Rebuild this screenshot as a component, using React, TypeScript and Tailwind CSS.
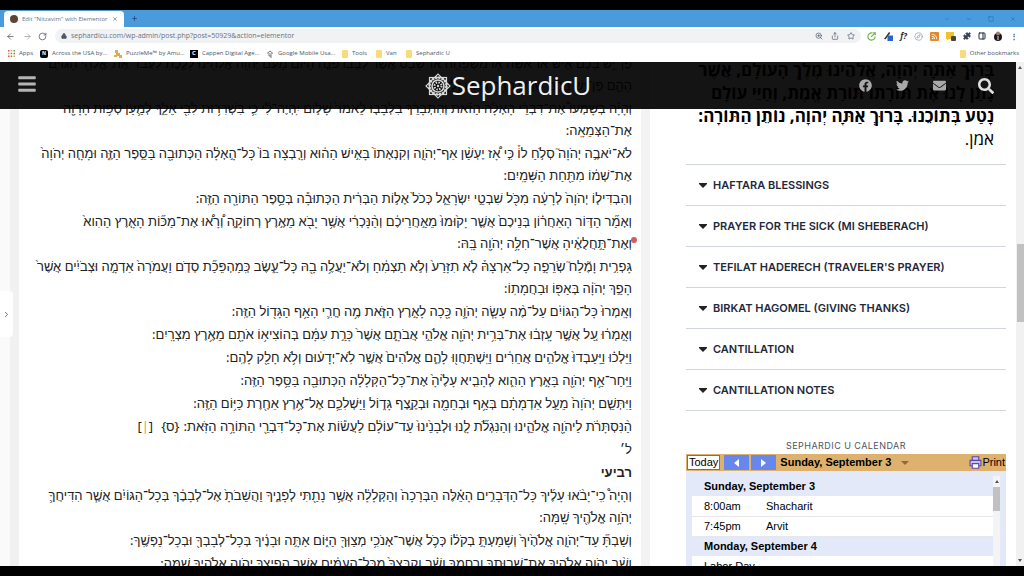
import {
  ArrowLeft,
  ArrowRight,
  ChevronDown,
  ChevronRight,
  Compass,
  Lock,
  Minus,
  PanelRight,
  Plus,
  Puzzle,
  RotateCw,
  Rss,
  Share,
  Square,
  Star,
  X,
  ZoomIn,
} from "lucide-react";
import { FaBars, FaEnvelope, FaFacebook, FaSearch, FaTwitter } from "react-icons/fa";

type Verse = { lines: string[]; bold?: boolean; sectionEnd?: boolean };

const verses: Verse[] = [
  {
    lines: [
      "פֶּן־יֵ֣שׁ בָּכֶ֗ם אִ֣ישׁ אֽוֹ־אִשָּׁ֞ה א֧וֹ מִשְׁפָּחָ֣ה אוֹ־שֵׁ֗בֶט אֲשֶׁר֩ לְבָב֨וֹ פֹנֶ֤ה הַיּוֹם֙ מֵעִם֙ יְהֹוָ֣ה אֱלֹהֵ֔ינוּ לָלֶ֣כֶת לַעֲבֹ֔ד אֶת־אֱלֹהֵ֖י הַגּוֹיִ֣ם",
      "הָהֵ֑ם פֶּן־יֵ֣שׁ בָּכֶ֗ם שֹׁ֛רֶשׁ פֹּרֶ֥ה רֹ֖אשׁ וְלַעֲנָֽה:",
    ],
  },
  {
    lines: [
      "וְהָיָ֡ה בְּשָׁמְעוֹ֩ אֶת־דִּבְרֵ֨י הָאָלָ֜ה הַזֹּ֗את וְהִתְבָּרֵ֨ךְ בִּלְבָב֤וֹ לֵאמֹר֙ שָׁל֣וֹם יִֽהְיֶה־לִּ֔י כִּ֛י בִּשְׁרִר֥וּת לִבִּ֖י אֵלֵ֑ךְ לְמַ֛עַן סְפ֥וֹת הָרָוָ֖ה",
      "אֶת־הַצְּמֵאָֽה:",
    ],
  },
  {
    lines: [
      "לֹא־יֹאבֶ֣ה יְהֹוָה֮ סְלֹ֣חַ לוֹ֒ כִּ֣י אָ֠ז יֶעְשַׁ֨ן אַף־יְהֹוָ֤ה וְקִנְאָתוֹ֙ בָּאִ֣ישׁ הַה֔וּא וְרָ֤בְצָה בּוֹ֙ כָּל־הָ֣אָלָ֔ה הַכְּתוּבָ֖ה בַּסֵּ֣פֶר הַזֶּ֑ה וּמָחָ֤ה יְהֹוָה֙",
      "אֶת־שְׁמ֔וֹ מִתַּ֖חַת הַשָּׁמָֽיִם:",
    ],
  },
  {
    lines: [
      "וְהִבְדִּיל֤וֹ יְהֹוָה֙ לְרָעָ֔ה מִכֹּ֖ל שִׁבְטֵ֣י יִשְׂרָאֵ֑ל כְּכֹל֙ אָל֣וֹת הַבְּרִ֔ית הַכְּתוּבָ֕ה בְּסֵ֥פֶר הַתּוֹרָ֖ה הַזֶּֽה:",
    ],
  },
  {
    lines: [
      "וְאָמַ֞ר הַדּ֣וֹר הָאַחֲר֗וֹן בְּנֵיכֶם֙ אֲשֶׁ֤ר יָק֙וּמוּ֙ מֵאַ֣חֲרֵיכֶ֔ם וְהַ֨נָּכְרִ֔י אֲשֶׁ֥ר יָבֹ֖א מֵאֶ֣רֶץ רְחוֹקָ֑ה וְ֠רָא֠וּ אֶת־מַכּ֞וֹת הָאָ֤רֶץ הַהִוא֙",
      "וְאֶת־תַּ֣חֲלֻאֶ֔יהָ אֲשֶׁר־חִלָּ֥ה יְהֹוָ֖ה בָּֽהּ:",
    ],
  },
  {
    lines: [
      "גָּפְרִ֣ית וָמֶ֘לַח֮ שְׂרֵפָ֣ה כָל־אַרְצָהּ֒ לֹ֤א תִזָּרַע֙ וְלֹ֣א תַצְמִ֔חַ וְלֹא־יַעֲלֶ֥ה בָ֖הּ כָּל־עֵ֑שֶׂב כְּֽמַהְפֵּכַ֞ת סְדֹ֤ם וַעֲמֹרָה֙ אַדְמָ֣ה וּצְבֹיִ֔ים אֲשֶׁר֙",
      "הָפַ֣ךְ יְהֹוָ֔ה בְּאַפּ֖וֹ וּבַחֲמָתֽוֹ:",
    ],
  },
  {
    lines: [
      "וְאָֽמְרוּ֙ כָּל־הַגּוֹיִ֔ם עַל־מֶ֨ה עָשָׂ֧ה יְהֹוָ֛ה כָּ֖כָה לָאָ֣רֶץ הַזֹּ֑את מֶ֥ה חֳרִ֛י הָאַ֥ף הַגָּד֖וֹל הַזֶּֽה:",
    ],
  },
  {
    lines: [
      "וְאָ֣מְר֔וּ עַ֚ל אֲשֶׁ֣ר עָֽזְב֔וּ אֶת־בְּרִ֥ית יְהֹוָ֖ה אֱלֹהֵ֣י אֲבֹתָ֑ם אֲשֶׁר֙ כָּרַ֣ת עִמָּ֔ם בְּהוֹצִיא֥וֹ אֹתָ֖ם מֵאֶ֥רֶץ מִצְרָֽיִם:",
    ],
  },
  {
    lines: [
      "וַיֵּלְכ֗וּ וַיַּֽעַבְדוּ֙ אֱלֹהִ֣ים אֲחֵרִ֔ים וַיִּֽשְׁתַּחֲו֖וּ לָהֶ֑ם אֱלֹהִים֙ אֲשֶׁ֣ר לֹֽא־יְדָע֔וּם וְלֹ֥א חָלַ֖ק לָהֶֽם:",
    ],
  },
  {
    lines: [
      "וַיִּֽחַר־אַ֥ף יְהֹוָ֖ה בָּאָ֣רֶץ הַהִ֑וא לְהָבִ֤יא עָלֶ֙יהָ֙ אֶת־כָּל־הַקְּלָלָ֔ה הַכְּתוּבָ֖ה בַּסֵּ֥פֶר הַזֶּֽה:",
    ],
  },
  {
    lines: [
      "וַיִּתְּשֵׁ֤ם יְהֹוָה֙ מֵעַ֣ל אַדְמָתָ֔ם בְּאַ֥ף וּבְחֵמָ֖ה וּבְקֶ֣צֶף גָּד֑וֹל וַיַּשְׁלִכֵ֛ם אֶל־אֶ֥רֶץ אַחֶ֖רֶת כַּיּ֥וֹם הַזֶּֽה:",
    ],
  },
  {
    lines: [
      "הַ֨נִּסְתָּרֹ֔ת לַיהֹוָ֖ה אֱלֹהֵ֑ינוּ וְהַנִּגְלֹ֞ת לָ֤נוּ וּלְבָנֵ֙ינוּ֙ עַד־עוֹלָ֔ם לַעֲשׂ֕וֹת אֶת־כָּל־דִּבְרֵ֖י הַתּוֹרָ֥ה הַזֹּֽאת:",
    ],
    sectionEnd: true,
  },
  { lines: ["ל׳"] },
  { lines: ["רביעי"], bold: true },
  {
    lines: [
      "וְהָיָה֩ כִֽי־יָבֹ֨אוּ עָלֶ֜יךָ כָּל־הַדְּבָרִ֣ים הָאֵ֗לֶּה הַבְּרָכָה֙ וְהַקְּלָלָ֔ה אֲשֶׁ֥ר נָתַ֖תִּי לְפָנֶ֑יךָ וַהֲשֵׁבֹתָ֙ אֶל־לְבָבֶ֔ךָ בְּכָל־הַגּוֹיִ֔ם אֲשֶׁ֧ר הִדִּיחֲךָ֛",
      "יְהֹוָ֥ה אֱלֹהֶ֖יךָ שָֽׁמָּה:",
    ],
  },
  {
    lines: [
      "וְשַׁבְתָּ֞ עַד־יְהֹוָ֤ה אֱלֹהֶ֙יךָ֙ וְשָׁמַעְתָּ֣ בְקֹל֔וֹ כְּכֹ֛ל אֲשֶׁר־אָנֹכִ֥י מְצַוְּךָ֖ הַיּ֑וֹם אַתָּ֣ה וּבָנֶ֔יךָ בְּכָל־לְבָבְךָ֖ וּבְכָל־נַפְשֶֽׁךָ:",
    ],
  },
  {
    lines: [
      "וְשָׁ֨ב יְהֹוָ֧ה אֱלֹהֶ֛יךָ אֶת־שְׁבוּתְךָ֖ וְרִחֲמֶ֑ךָ וְשָׁ֗ב וְקִבֶּצְךָ֙ מִכָּל־הָ֣עַמִּ֔ים אֲשֶׁ֧ר הֱפִֽיצְךָ֛ יְהֹוָ֥ה אֱלֹהֶ֖יךָ שָֽׁמָּה:",
    ],
  },
];

const toggles = [
  "HAFTARA BLESSINGS",
  "PRAYER FOR THE SICK (MI SHEBERACH)",
  "TEFILAT HADERECH (TRAVELER'S PRAYER)",
  "BIRKAT HAGOMEL (GIVING THANKS)",
  "CANTILLATION",
  "CANTILLATION NOTES",
];

function Folder() {
  return <span className="h-2 w-[6px] rounded-[1px] bg-[#f8dc7c]" />;
}

function BrowserChrome() {
  return (
    <div className="shrink-0 font-['Open_Sans',sans-serif]">
      <div className="flex h-[17px] items-end bg-[#4a9bdc] pl-1">
        <div className="flex h-4 w-[120px] items-center rounded-t bg-white px-[6px] text-[6px] text-gray-500">
          <span className="mr-1 size-2 rounded-full bg-[#5b4636]" />
          <span className="flex-1 whitespace-nowrap">Edit "Nitzavim" with Elementor</span>
          <button aria-label="Close tab"><X className="size-[6px] text-gray-700" /></button>
        </div>
        <button aria-label="New tab" className="ml-[7px] self-center"><Plus className="size-[7px] text-[#12324f]" /></button>
        <div className="ml-auto flex items-center gap-4 self-center pr-2 text-[#2b6598]">
          <ChevronDown className="size-[6px]" />
          <Minus className="size-[6px]" />
          <Square className="size-[6px]" />
          <X className="size-[6px]" />
        </div>
      </div>

      <div className="flex h-[18px] items-center bg-white pr-[6px] pl-[6px] text-gray-600">
        <button aria-label="Back"><ArrowLeft className="size-[9px]" /></button>
        <button aria-label="Forward" className="ml-2"><ArrowRight className="size-[9px] text-gray-400" /></button>
        <button aria-label="Reload" className="ml-[6px]"><RotateCw className="size-[9px]" /></button>
        <div className="ml-2 flex h-[14px] flex-1 items-center gap-1 rounded-full bg-[#f0f2f4] px-[6px]">
          <Lock className="size-[6px] fill-gray-600" />
          <input
            aria-label="Address"
            className="min-w-0 flex-1 bg-transparent text-[7px] text-gray-500 outline-none"
            defaultValue="sephardicu.com/wp-admin/post.php?post=50929&action=elementor"
          />
          <ZoomIn className="size-2" />
          <Share className="ml-1 size-2" />
          <Star className="ml-1 size-2" />
        </div>
        <div className="ml-[6px] flex items-center gap-[7px]">
          <svg className="size-[9px]" viewBox="0 0 10 10" fill="none" stroke="#6cb74a" strokeWidth="1.3">
            <path d="M6 1.2A4 4 0 1 0 9 5M4.5 5.5 9 1M6.5.8H9.2V3.5" />
          </svg>
          <svg className="size-[10px]" viewBox="0 0 10 10">
            <path d="M1 8 6 1l1.3 1L2.6 8.2z" fill="#333" />
            <rect x="4.5" y="4.5" width="5.5" height="5.5" fill="#2667c9" />
          </svg>
          <span className="text-[8px] leading-none font-bold text-gray-800 italic">f?</span>
          <Compass className="size-[9px] text-gray-400" />
          <span className="flex size-[9px] items-center justify-center rounded-[1px] bg-[#e1872c]"><Rss className="size-[7px] text-white" strokeWidth={3} /></span>
          <svg className="size-[10px]" viewBox="0 0 10 10">
            <path d="M0 1h8v7H3L1 9.500V8H0z" fill="#f2c22b" />
            <rect x="5" y="5" width="5" height="5" rx="1" fill="#444" />
          </svg>
          <Puzzle className="size-2 fill-gray-700 text-gray-700" />
          <PanelRight className="size-2 text-gray-800" strokeWidth={3} />
          <svg className="size-[10px]" viewBox="0 0 10 10">
            <circle cx="5" cy="6" r="4" fill="#1e1a1a" />
            <circle cx="5" cy="2.500" r="2" fill="#9b7d6b" />
            <path d="M4.500 5h1v4h-1z" fill="#ddd" />
          </svg>
          <span className="text-[8px] leading-none font-bold">⋮</span>
        </div>
      </div>

      <nav className="flex h-[17px] items-center bg-white pr-[5px] pl-2 text-[6px] whitespace-nowrap text-gray-600">
        <a href="#apps" className="flex w-8 items-center gap-1">
          <svg className="size-[7px]" viewBox="0 0 7 7">
            <path d="M0 0h1.500v1.500H0zM0 5.500h1.500V7H0zM5.500 2.700H7v1.500H5.500z" fill="#d9534f" />
            <path d="M2.700 0h1.500v1.500H2.700zM0 2.700h1.500v1.500H0zM5.500 5.500H7V7H5.500z" fill="#dba73b" />
            <path d="M5.500 0H7v1.500H5.500zM2.700 2.700h1.500v1.500H2.700zM2.700 5.500h1.500V7H2.700z" fill="#5c9b62" />
          </svg>
          Apps
        </a>
        <a href="#usa" className="flex w-[74px] items-center gap-1">
          <span className="flex size-2 items-center justify-center rounded-[2px] bg-black text-[5px] font-bold text-white">N</span>
          Across the USA by...
        </a>
        <a href="#puzzleme" className="flex w-[76px] items-center gap-1">
          <svg className="size-2" viewBox="0 0 8 8">
            <path d="M1 0h3v3h2v2h2v3H5V6H3v1H0V5h2V3H1z" fill="#e0ac4d" />
          </svg>
          PuzzleMe™ by Amu...
        </a>
        <a href="#cappen" className="flex w-[76px] items-center gap-1">
          <span className="flex size-2 items-center justify-center bg-black text-[6px] font-bold text-white">C</span>
          Cappen Digital Age...
        </a>
        <a href="#mobile" className="flex w-[76px] items-center gap-1">
          <svg className="size-2" viewBox="0 0 8 8" fill="none" stroke="#777">
            <path d="M1 3.500 4 1l3 2.500M3 3v3h2v2M5 3v3" />
          </svg>
          Google Mobile Usa...
        </a>
        <a href="#tools" className="flex w-[34px] items-center gap-1"><Folder />Tools</a>
        <a href="#van" className="flex w-[30px] items-center gap-1"><Folder />Van</a>
        <a href="#sephardic" className="flex items-center gap-1"><Folder />Sephardic U</a>
        <a href="#other" className="ml-auto flex items-center gap-1"><Folder />Other bookmarks</a>
      </nav>
    </div>
  );
}

function LogoMark() {
  return (
    <svg className="size-[26px]" viewBox="0 0 26 26" fill="none" stroke="#d8d8d8">
      <rect x="4.500" y="4.500" width="17" height="17" strokeWidth="1.200" />
      <rect x="4.500" y="4.500" width="17" height="17" strokeWidth="1.200" transform="rotate(45 13 13)" />
      <circle cx="13" cy="13" r="8.500" strokeWidth="2.500" strokeDasharray="2.400 0.938" />
      <circle cx="13" cy="13" r="6" strokeWidth="1.600" />
      <circle cx="13" cy="13" r="3.500" strokeWidth="2" strokeDasharray="1.500 1.249" />
      <circle cx="13" cy="13" r="1.200" fill="#d8d8d8" stroke="none" />
    </svg>
  );
}

function SiteHeader() {
  return (
    <header className="absolute inset-x-0 top-0 flex h-[47px] items-center justify-between bg-black/92 pr-[22px] pl-[17px] text-[#a9a9a9]">
      <button aria-label="Menu" className="w-[140px] pb-[3px]"><FaBars className="size-5 text-[#b5b5b5]" /></button>
      <a href="#home" className="flex items-center gap-px text-[#f0f0f0]">
        <LogoMark />
        <span className="pb-[2px] font-['Open_Sans',sans-serif] text-[26px] leading-none font-medium">SephardicU</span>
      </a>
      <div className="flex items-center gap-6">
        <a href="#facebook" aria-label="Facebook"><FaFacebook className="size-[13px]" /></a>
        <a href="#twitter" aria-label="Twitter"><FaTwitter className="size-[13px]" /></a>
        <a href="#mail" aria-label="Email"><FaEnvelope className="size-[13px]" /></a>
        <button aria-label="Search" className="ml-2"><FaSearch className="size-4 text-[#dedede]" /></button>
      </div>
    </header>
  );
}

function Calendar() {
  return (
    <section className="font-['Liberation_Sans',Arial,sans-serif] text-[11px] text-black">
      <div className="flex h-[17px] items-center bg-[#dcb26e] px-px">
        <button className="mr-1 h-[15px] border border-gray-500 bg-white px-px text-[11px] leading-none">Today</button>
        <button aria-label="Previous" className="mr-[2px] flex h-[15px] w-[25px] items-center justify-center bg-[#6688ee]">
          <svg className="h-2 w-[5px]" viewBox="0 0 5 8"><path d="M5 0v8L0 4z" fill="#fff" /></svg>
        </button>
        <button aria-label="Next" className="flex h-[15px] w-[25px] items-center justify-center bg-[#6688ee]">
          <svg className="h-2 w-[5px]" viewBox="0 0 5 8"><path d="M0 0v8l5-4z" fill="#fff" /></svg>
        </button>
        <button className="ml-1 flex items-center gap-[10px] text-[11px] font-bold">
          Sunday, September 3
          <svg className="h-1 w-2" viewBox="0 0 8 4"><path d="M0 0h8L4 4z" fill="#8b6b3c" /></svg>
        </button>
        <button className="ml-auto flex items-center">
          <svg className="size-[13px]" viewBox="0 0 12 12" fill="#fff" stroke="#5b48a8">
            <path d="M3 4V.700h6V4M1 4h10v5H1z" fill="#c9c1ea" />
            <path d="M3 7h6v4.300H3z" />
          </svg>
          Print
        </button>
      </div>
      <div className="flex bg-[#e3e9f8] px-[6px] pt-[5px]">
        <table className="flex-1 border-collapse text-left">
          <tbody className="[&_td]:border-b [&_td]:border-gray-200 [&_td]:bg-white [&_td]:p-0 [&_th]:p-0 [&_th]:pl-3 [&_tr]:h-[20px]">
            <tr><th colSpan={2}>Sunday, September 3</th></tr>
            <tr><td className="w-[74px]"><span className="pl-3">8:00am</span></td><td>Shacharit</td></tr>
            <tr><td><span className="pl-3">7:45pm</span></td><td>Arvit</td></tr>
            <tr><th colSpan={2}>Monday, September 4</th></tr>
            <tr><td colSpan={2}><span className="pl-3">Labor Day</span></td></tr>
          </tbody>
        </table>
        <div className="flex w-[7px] flex-col items-center bg-[#f4f4f4]">
          <svg className="my-1 h-[3px] w-1" viewBox="0 0 4 3"><path d="M0 3h4L2 0z" fill="#555" /></svg>
          <div className="h-6 w-full bg-[#c1c1c1]" />
        </div>
      </div>
    </section>
  );
}

function Sidebar() {
  return (
    <aside className="mr-[10px] w-80 shrink-0">
      <div dir="rtl" className="-mt-1 h-[106px] pr-3 font-['Open_Sans','Noto_Sans',sans-serif] text-[17px] leading-[23px] font-bold whitespace-nowrap text-black">
        <p>בָּרוּךְ אַתָּה יְהֹוָה, אֱלֹהֵינוּ מֶלֶךְ הָעוֹלָם, אֲשֶׁר</p>
        <p>נָתַן לָנוּ אֶת תּוֹרָתוֹ תּוֹרַת אֱמֶת, וְחַיֵּי עוֹלָם</p>
        <p>נָטַע בְּתוֹכֵנוּ. בָּרוּךְ אַתָּה יְהֹוָה, נוֹתֵן הַתּוֹרָה:</p>
        <p className="font-medium">אמן.</p>
      </div>
      <ul className="border-t border-gray-300 font-['Inter',sans-serif]">
        {toggles.map((label) => (
          <li key={label} className="border-b border-gray-300">
            <button className="flex h-10 w-full items-center gap-[6px] pl-[13px] text-[11px] font-semibold whitespace-nowrap text-gray-800">
              <svg className="h-[5px] w-2" viewBox="0 0 8 5"><path d="M0 0h8v1L4 5 0 1z" fill="#222" /></svg>
              {label}
            </button>
          </li>
        ))}
      </ul>
      <h2 className="pt-[27px] text-center font-['Inter',sans-serif] text-[9px] leading-[16px] tracking-wider text-gray-600">SEPHARDIC U CALENDAR</h2>
      <Calendar />
    </aside>
  );
}

export default function App() {
  return (
    <div className="flex h-screen flex-col overflow-hidden bg-black py-[10px]">
      <BrowserChrome />
      <div className="flex min-h-0 flex-1 bg-white">
        <div className="relative flex flex-1 overflow-hidden">
          <div className="flex w-[19px] shrink-0 items-center border-r-[9px] border-[#f1f1f1] bg-[#fafafa]">
            <button aria-label="Open panel" className="z-10 -mr-1 flex h-[46px] w-[13px] shrink-0 items-center justify-center rounded-r bg-white">
              <ChevronRight className="size-[9px] text-gray-700" />
            </button>
          </div>
          <article
            dir="rtl"
            className="-mt-[10px] min-w-0 flex-1 pr-[9px] font-['Noto_Sans',sans-serif] text-[13px] whitespace-nowrap text-[#222]"
          >
            {verses.map(({ lines, bold, sectionEnd }) => (
              <p
                key={lines[0]}
                className={lines.length > 1 ? "pb-px leading-[22px]" : bold ? "leading-[23px] font-bold" : "leading-[23px]"}
              >
                {lines.map((line) => (
                  <span key={line} className="block">
                    {line}
                    {sectionEnd && (
                      <>
                        <span className="ms-1">{"{ס}"}</span>
                        <span className="ms-2">[<span className="text-[#e0a050]">|</span>]</span>
                      </>
                    )}
                  </span>
                ))}
              </p>
            ))}
          </article>
          <div className="mr-9 w-[9px] shrink-0 bg-[#f3f3f3]" />
          <Sidebar />
          <span className="absolute top-[175px] left-[631px] size-[6px] rounded-full bg-[#d0605e]" />
          <SiteHeader />
        </div>
        <div className="flex w-2 shrink-0 flex-col items-center justify-between bg-[#f1f1f1] py-1">
          <svg className="h-[3px] w-1" viewBox="0 0 4 3"><path d="M0 3h4L2 0z" fill="#555" /></svg>
          <div className="mb-[62px] h-[78px] w-[7px] bg-[#c1c1c1]" />
          <svg className="h-[3px] w-1" viewBox="0 0 4 3"><path d="M0 0h4L2 3z" fill="#555" /></svg>
        </div>
      </div>
    </div>
  );
}
